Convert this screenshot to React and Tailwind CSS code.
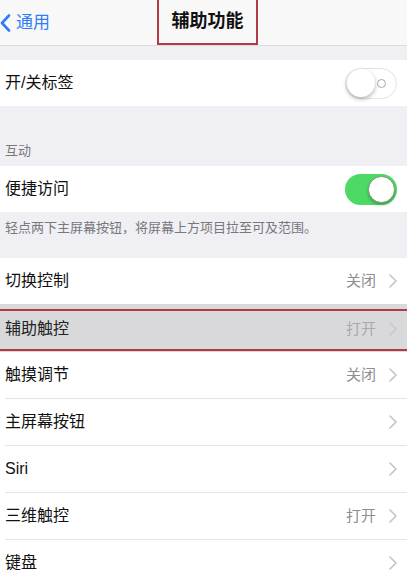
import React from "react";

const FONT = "font-['Liberation_Sans','Noto_Sans_CJK_SC',sans-serif]";

function Chevron({ light }) {
  return (
    <svg width="8" height="14" viewBox="0 0 8 14" className="shrink-0">
      <path
        d="M1 1l6 6-6 6"
        fill="none"
        stroke={light ? "#c9c9cc" : "#c4c4c8"}
        strokeWidth="1.6"
        strokeLinecap="round"
        strokeLinejoin="round"
      />
    </svg>
  );
}

function Toggle({ on }) {
  if (on) {
    return (
      <div className="flex h-[31px] w-[52px] items-center justify-end rounded-full bg-[#4cd964] p-[2px]">
        <div className="h-[27px] w-[27px] rounded-full border border-[#7a9a80] bg-white shadow-[0_2px_3px_rgba(0,0,0,0.25)]" />
      </div>
    );
  }
  return (
    <div className="relative flex h-[31px] w-[52px] items-center rounded-full border border-[#e3e3e6] bg-white p-[1px]">
      <div className="h-[28px] w-[28px] rounded-full bg-white shadow-[0_2px_4px_rgba(0,0,0,0.3)]" />
      <div className="absolute right-[10px] h-[9px] w-[9px] rounded-full border border-[#a8a8ac]" />
    </div>
  );
}

function Row({ label, detail, chevron, toggle, dim }) {
  return (
    <div className="flex h-[46px] items-center justify-between bg-white pl-[5px] pr-[10px]">
      <span className="text-[16px] text-[#111]">{label}</span>
      <div className="flex items-center gap-[13px]">
        {detail && (
          <span className={`text-[15px] ${dim ? "text-[#b4b4b6]" : "text-[#8e8e93]"}`}>{detail}</span>
        )}
        {chevron && <Chevron light={dim} />}
        {toggle}
      </div>
    </div>
  );
}

function Sep() {
  return (
    <div className="bg-white pl-[5px]">
      <div className="h-px bg-[#e4e4e7]" />
    </div>
  );
}

export default function App() {
  return (
    <div className={`${FONT} h-[586px] w-[412px] overflow-hidden bg-white`}>
      <div className="w-[407px] bg-[#efeff4]">
        <header className="flex h-[46px] items-center justify-between border-b border-[#dcdce0] bg-[#f8f8f9]">
          <div className="flex w-[124px] items-center gap-[5px] text-[#2f7cf6]">
            <svg width="11" height="18" viewBox="0 0 11 18">
              <path d="M9 1.5L2 9l7 7.5" fill="none" stroke="#2f7cf6" strokeWidth="2.6" strokeLinecap="round" strokeLinejoin="round" />
            </svg>
            <span className="text-[17px]">通用</span>
          </div>
          <div className="flex h-[47px] w-[101px] -translate-y-[1px] translate-x-[4px] items-center justify-center border-2 border-[#b23a48]">
            <span className="text-[18px] font-semibold text-[#111]">辅助功能</span>
          </div>
          <div className="w-[124px]" />
        </header>

        <div className="h-[14px]" />
        <Row label="开/关标签" toggle={<Toggle />} />

        <div className="flex h-[60px] items-end pb-[6px] pl-[5px]">
          <span className="text-[13px] text-[#77777c]">互动</span>
        </div>
        <Row label="便捷访问" toggle={<Toggle on />} />
        <div className="flex h-[46px] items-start pl-[5px] pt-[6px]">
          <span className="text-[13px] text-[#77777c]">轻点两下主屏幕按钮，将屏幕上方项目拉至可及范围。</span>
        </div>

        <Row label="切换控制" detail="关闭" chevron />
        <div className="relative h-[48px] bg-[#d9d9db] pl-[5px] pr-[10px]">
          <div className="absolute inset-x-0 top-[5px] bottom-[1px] border-y-2 border-[#b23a48]" />
          <div className="flex h-full items-center justify-between pt-[2px]">
            <span className="text-[16px] text-[#222]">辅助触控</span>
            <div className="flex items-center gap-[13px]">
              <span className="text-[15px] text-[#a9a9ad]">打开</span>
              <Chevron light />
            </div>
          </div>
        </div>
        <Row label="触摸调节" detail="关闭" chevron />
        <Sep />
        <Row label="主屏幕按钮" chevron />
        <Sep />
        <Row label="Siri" chevron />
        <Sep />
        <Row label="三维触控" detail="打开" chevron />
        <Sep />
        <Row label="键盘" chevron />
        <Sep />
        <div className="h-[10px] bg-white" />
      </div>
    </div>
  );
}
